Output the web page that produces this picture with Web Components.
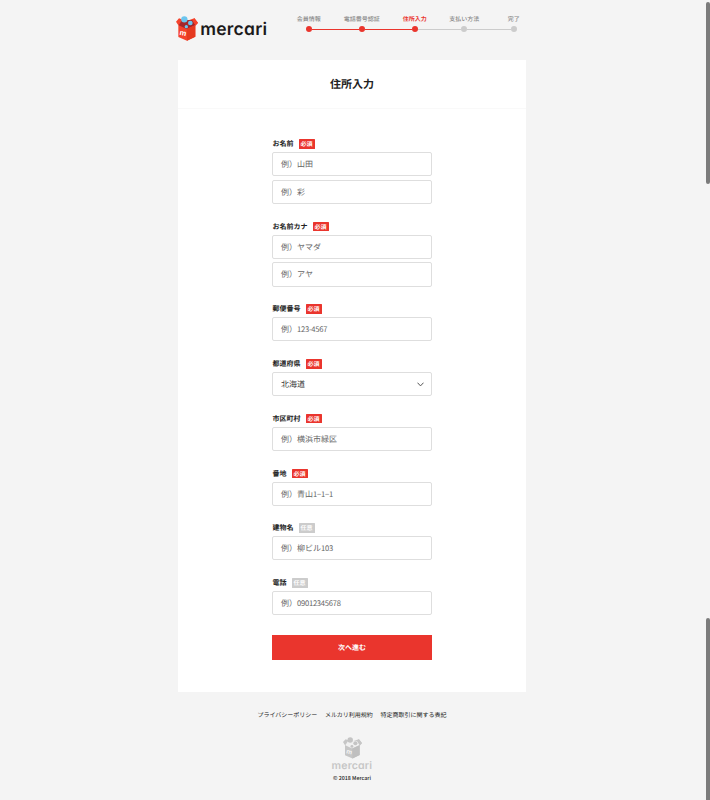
<!DOCTYPE html>
<html lang="ja">
<head>
<meta charset="utf-8">
<title>住所入力</title>
<style>
html,body{margin:0;height:800px;overflow:hidden;background:#f4f4f4}
body{font-family:"Noto Sans CJK JP","Noto Sans",sans-serif;color:#222;text-rendering:geometricPrecision}
</style>
</head>
<body>
<address-page></address-page>
<script>
const define = (name, html) => customElements.define(name, class extends HTMLElement {
  connectedCallback() {
    if (this.shadowRoot) return;
    const root = this.attachShadow({ mode: 'open' });
    root.innerHTML = typeof html === 'function' ? html(this) : html;
  }
});

define('box-mark', `
<style>:host{display:block;flex:none}svg{display:block;width:100%;height:100%}</style>
<svg viewBox="0 0 66 75">
  <path fill="var(--box,#f4432c)" d="M0 17 9 7 31 15 55 7 66 21 58 30 58 62 33 74 7 63 7 28Z"/>
  <path fill="var(--inside,#a3262b)" d="M8 28 17 14 33 12 50 13 58 27 32 39Z"/>
  <path fill="var(--side,#e5391f)" d="M32 39 58 28 58 62 33 74Z"/>
  <path fill="var(--box,#f4432c)" d="M58 27 49 14 55 6 66 20Z"/>
  <circle cx="25" cy="10" r="9.5" fill="var(--ball,#6cc5ee)"/>
  <circle cx="43" cy="21" r="7" fill="var(--ball,#6cc5ee)"/>
  <circle cx="31" cy="32" r="5" fill="var(--ball,#6cc5ee)"/>
  <text x="10" y="56" font-family="Inter" font-weight="700" font-size="22" fill="var(--letter,#fff)" transform="rotate(12 10 56)">m</text>
</svg>`);

define('word-mark', `
<style>:host{display:block;flex:none}svg{display:block;width:100%;height:100%;overflow:visible}
text{font-family:Inter,sans-serif;font-weight:600;font-size:17.5px;font-feature-settings:"cv11";fill:currentColor}</style>
<svg viewBox="0 0 66 20"><text x="-.8" y="15" textLength="67" lengthAdjust="spacing">mercari</text></svg>`);

define('progress-step', `
<style>
:host{display:flex;flex:none;flex-direction:column;align-items:center;width:53px;font-size:6px;line-height:10px;color:#888;font-weight:500;--l:#ccc;--r:#ccc;--dot:#ccc;white-space:nowrap}
:host([narrow]){width:46px}
:host([done]){--l:#ea352d;--r:#ea352d;--dot:#ea352d}
:host([current]){--l:#ea352d;--dot:#ea352d;color:#ea352d;font-weight:700}
:host([first]){--l:transparent}:host([last]){--r:transparent}
.rail{display:grid;grid-template-columns:1fr 6px 1fr;align-items:center;width:100%;height:6px;margin-top:2px}
i{height:1px}.a{background:var(--l)}.b{background:var(--r)}
.dot{height:6px;border-radius:50%;background:var(--dot)}
</style>
<slot></slot><div class="rail"><i class="a"></i><span class="dot"></span><i class="b"></i></div>`);

define('site-header', `
<style>
:host{display:flex;width:380px;height:60px;margin-left:176px}
box-mark{width:22px;height:25px;margin-top:16px}
word-mark{width:66px;height:20px;margin:20px 0 0 2.5px;color:#1c1a1a}
nav{display:flex;flex:none;margin:14.4px 0 0 15.8px}
</style>
<box-mark></box-mark><word-mark></word-mark>
<nav>
<progress-step done first>会員情報</progress-step><progress-step done>電話番号認証</progress-step><progress-step current>住所入力</progress-step><progress-step narrow>支払い方法</progress-step><progress-step last>完了</progress-step>
</nav>`);

define('tag-label', `
<style>:host{display:block;width:16px;height:9.5px;background:#ea352d;color:#fff;font-size:6px;line-height:9.5px;font-weight:700;text-align:center;border-radius:.5px}
:host([optional]){background:#ccc}</style><slot></slot>`);

define('text-box', e => `
<style>:host{display:flex;align-items:center;justify-content:space-between;box-sizing:border-box;height:24.1px;border:1px solid #dedede;border-radius:2px;background:#fff;padding:1.8px 7px 0 8px;font-size:8px;line-height:12px;color:#666}
:host([select]){color:#333}svg{width:7px;height:5px;margin-bottom:1.4px}::slotted(b){font-weight:400;font-size:7.6px;letter-spacing:-.24px}</style>
<span><slot></slot></span>${e.hasAttribute('select') ? '<svg viewBox="0 0 7 5"><path d="M.5.7 3.5 3.9 6.5.7" fill="none" stroke="#555" stroke-width="1"/></svg>' : ''}`);

define('form-field', e => `
<style>:host{display:block;margin-bottom:17.8px}
header{display:flex;align-items:center;gap:5.5px;height:9.5px;margin-bottom:3.4px;font-size:7px;font-weight:700;line-height:9.5px;color:#222}
header span{padding:1.7px 0 0 .4px;margin-right:-.4px}
.inputs{display:grid;gap:3.75px}</style>
<header><span>${e.getAttribute('label')}</span><tag-label ${e.hasAttribute('optional') ? 'optional' : ''}>${e.hasAttribute('optional') ? '任意' : '必須'}</tag-label></header>
<div class="inputs"><slot></slot></div>`);

define('submit-button', `
<style>:host{display:flex;align-items:center;justify-content:center;box-sizing:border-box;height:25px;padding-top:1px;background:#ea352d;color:#fff;font-size:7px;font-weight:700;line-height:10px;margin-top:19.4px}</style><slot></slot>`);

define('form-card', `
<style>:host{display:block;box-sizing:border-box;width:348px;height:632px;margin-left:178px;background:#fff}
h1{box-sizing:border-box;height:49px;margin:0;border-bottom:1px solid #f9f9f9;font-size:11px;line-height:48px;font-weight:700;text-align:center;color:#222}
main{width:160px;padding:30.1px 0 0 94px}</style>
<h1>住所入力</h1>
<main>
<form-field label="お名前"><text-box>例）山田</text-box><text-box>例）彩</text-box></form-field>
<form-field label="お名前カナ"><text-box>例）ヤマダ</text-box><text-box>例）アヤ</text-box></form-field>
<form-field label="郵便番号"><text-box>例）<b>123-4567</b></text-box></form-field>
<form-field label="都道府県"><text-box select>北海道</text-box></form-field>
<form-field label="市区町村"><text-box>例）横浜市緑区</text-box></form-field>
<form-field label="番地"><text-box>例）青山<b>1−1−1</b></text-box></form-field>
<form-field label="建物名" optional><text-box>例）柳ビル<b>103</b></text-box></form-field>
<form-field label="電話" optional><text-box>例）<b>09012345678</b></text-box></form-field>
<submit-button>次へ進む</submit-button>
</main>`);

define('site-footer', `
<style>:host{display:flex;flex-direction:column;align-items:center;width:348px;margin-left:178px;padding-top:17.5px;box-sizing:border-box}
nav{display:flex;gap:7.7px;font-size:6px;line-height:10px;color:#222;white-space:nowrap}
box-mark{width:19px;height:22px;margin-top:17.5px;--box:#c6c6c6;--inside:#f0f0f0;--side:#bfbfbf;--ball:#c4c4c4;--letter:#f4f4f4}
word-mark{width:40px;height:12.1px;margin-top:1.3px;color:#c6c6c6}
small{font-size:5.3px;line-height:8px;color:#222;margin-top:2px;font-weight:500}</style>
<nav><span>プライバシーポリシー</span><span>メルカリ利用規約</span><span>特定商取引に関する表記</span></nav>
<box-mark></box-mark><word-mark></word-mark><small>© 2018 Mercari</small>`);

define('scroll-thumbs', `
<style>:host{position:absolute;top:2px;left:706px;width:3.5px;height:798px;display:flex;flex-direction:column;justify-content:space-between;overflow:hidden}
i{background:#7b7b7b;border-radius:2px;height:182px}.b{border-radius:2px 2px 0 0}</style><i></i><i class="b"></i>`);

define('address-page', `
<style>:host{display:block;position:relative;width:710px;height:800px;overflow:hidden;background:#f4f4f4}</style>
<site-header></site-header><form-card></form-card><site-footer></site-footer><scroll-thumbs></scroll-thumbs>`);
</script>
</body>
</html>
